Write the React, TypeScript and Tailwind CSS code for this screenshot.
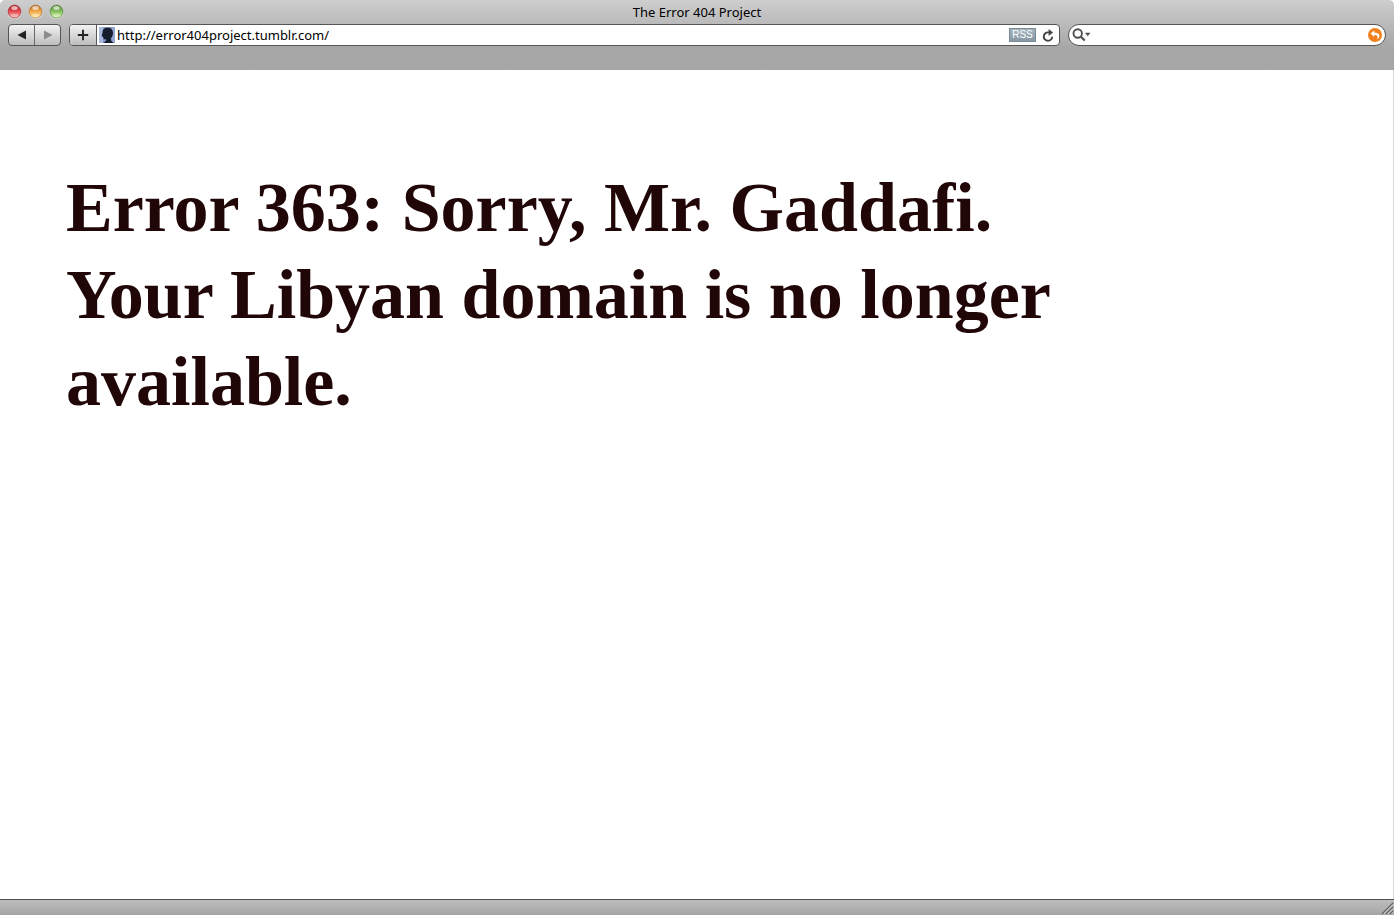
import { useState } from "react";

function TrafficLight({ id, label, dark, mid, light }: { id: string; label: string; dark: string; mid: string; light: string }) {
  return (
    <button type="button" aria-label={label} className="size-[15px]">
      <svg viewBox="0 0 15 15" className="block size-[15px]">
        <defs>
          <linearGradient id={id} x1="0" y1="0" x2="0" y2="1">
            <stop offset="0" stopColor={dark} />
            <stop offset="0.45" stopColor={mid} />
            <stop offset="1" stopColor={light} />
          </linearGradient>
        </defs>
        <circle cx="7.5" cy="8" r="7" fill="#dedede" />
        <circle cx="7.5" cy="7.5" r="6.4" fill={`url(#${id})`} stroke={dark} strokeWidth="0.8" strokeOpacity="0.8" />
        <ellipse cx="7.5" cy="4" rx="3.2" ry="1.9" fill="#fff" opacity="0.65" />
        <ellipse cx="7.5" cy="11.4" rx="4" ry="1.8" fill="#fff" opacity="0.3" />
      </svg>
    </button>
  );
}

function Favicon() {
  return (
    <svg viewBox="0 0 16 16" className="block size-4 shrink-0" aria-hidden="true">
      <rect width="16" height="16" fill="#8296c6" />
      <path d="M0 0h4v16H0z" fill="#a9b8dc" />
      <path d="M13 0h3v16h-3z" fill="#93a5d2" />
      <path d="M3.500 5.500C3.500 2 6 .8 8.700 .8c3.500 0 5.300 2.200 5.300 5.100 0 2.300-.8 4-2.200 5.300l.3 2.300 2.400 2.500H4.500l2.700-2.500-.2-1.300H4.700l-.5-2.200-1.500-.8z" fill="#141c2e" />
    </svg>
  );
}

export default function App() {
  const [url, setUrl] = useState("http://error404project.tumblr.com/");
  const [query, setQuery] = useState("");

  return (
    <div className="flex min-h-screen flex-col bg-white font-['Noto_Sans',sans-serif] text-black">
      <header className="h-[70px] shrink-0 rounded-t-[5px] bg-linear-to-b from-[#cecece] to-[#a6a6a6] to-70%">
        <div className="grid h-[23px] grid-cols-[1fr_auto_1fr] items-center px-[7px]">
          <div className="flex gap-[6px]">
            <TrafficLight id="close" label="Close" dark="#a32129" mid="#e0434a" light="#ffb0ac" />
            <TrafficLight id="minimize" label="Minimize" dark="#ae6527" mid="#f0a343" light="#ffec9f" />
            <TrafficLight id="zoom" label="Zoom" dark="#4d8134" mid="#7fbc59" light="#d3f7a5" />
          </div>
          <h2 className="text-[13px] leading-5">The Error 404 Project</h2>
        </div>

        <div className="flex h-[23px] items-center gap-2 px-2 pt-px">
          <nav aria-label="History" className="flex h-[22px] w-[53px] shrink-0 overflow-hidden rounded-[4px] border border-[#555] bg-linear-to-b from-[#f3f3f3] to-[#bdbdbd]">
            <button type="button" aria-label="Back" className="flex flex-1 items-center justify-center border-r border-[#666]">
              <svg viewBox="0 0 10 10" className="size-[10px]"><path d="M.5 5 9 .6v8.800z" fill="#222" /></svg>
            </button>
            <button type="button" aria-label="Forward" className="flex flex-1 items-center justify-center">
              <svg viewBox="0 0 10 10" className="size-[10px]"><path d="M9.500 5 1 .6v8.800z" fill="#8b8b8b" /></svg>
            </button>
          </nav>

          <div className="flex h-[22px] min-w-0 flex-1 items-center overflow-hidden rounded-[4px] border border-[#555] bg-white">
            <button type="button" aria-label="Add bookmark" className="flex h-full w-[27px] shrink-0 items-center justify-center border-r border-[#555] bg-linear-to-b from-[#f3f3f3] to-[#bdbdbd]">
              <svg viewBox="0 0 12 12" className="size-3"><path d="M6 .8v10.400M.8 6h10.400" stroke="#222" strokeWidth="1.900" /></svg>
            </button>
            <div className="flex min-w-0 flex-1 items-center gap-[2px] pl-[2px]">
              <Favicon />
              <input
                aria-label="Address"
                value={url}
                onChange={(e) => setUrl(e.target.value)}
                className="h-5 min-w-0 flex-1 bg-transparent text-[13px] leading-5 outline-none"
              />
            </div>
            <button type="button" className="h-[14px] w-[27px] shrink-0 border border-[#7b8b96] bg-linear-to-b from-[#a5b5c0] to-[#8797a3] font-['Liberation_Sans',sans-serif] text-[10px] leading-3 text-white">
              RSS
            </button>
            <button type="button" aria-label="Reload" className="flex w-[23px] shrink-0 items-center justify-center">
              <svg viewBox="0 0 12 13" className="h-[13px] w-3">
                <path d="M8 3.400H6.200A4.200 4.200 0 1 0 10.200 7.700" fill="none" stroke="#444" strokeWidth="1.900" />
                <path d="M6.600 .1 11 3.500 6.600 6.900z" fill="#444" />
              </svg>
            </button>
          </div>

          <div className="flex h-[22px] w-[318px] shrink-0 items-center rounded-full border border-[#555] bg-white pr-[3px] pl-[3px]">
            <button type="button" aria-label="Search options" className="shrink-0">
              <svg viewBox="0 0 19 14" className="block h-[14px] w-[19px]">
                <circle cx="5.700" cy="5.500" r="4.200" fill="none" stroke="#505050" strokeWidth="1.900" />
                <path d="m8.700 8.500 4 4" stroke="#505050" strokeWidth="2.300" />
                <path d="M13 4.800h5.400l-2.700 3.400z" fill="#505050" />
              </svg>
            </button>
            <input
              aria-label="Search"
              value={query}
              onChange={(e) => setQuery(e.target.value)}
              className="h-5 min-w-0 flex-1 bg-transparent px-1 text-[13px] leading-5 outline-none"
            />
            <button type="button" aria-label="Return to search results" className="shrink-0">
              <svg viewBox="0 0 14 14" className="block size-[14px]">
                <circle cx="7" cy="7" r="7" fill="#f0811c" />
                <path d="M2.600 5.600 6.200 2.400v2c3.200 0 5.300 1.300 5.300 3.700 0 1.700-1.200 2.800-3.300 3.100 1.300-.8 1.600-1.500 1.300-2.500-.4-1.200-1.600-1.600-3.300-1.600v2z" fill="#fff" />
              </svg>
            </button>
          </div>
        </div>
      </header>

      <main className="flex-1 border-r border-[#d8d8d8] px-[66px] pt-[94px]">
        <h1 className="max-w-[1100px] font-['Liberation_Serif',serif] text-[70px] leading-[87px] font-bold text-[#210608]">
          Error 363: Sorry, Mr. Gaddafi.
          <br />
          Your Libyan domain is no longer available.
        </h1>
      </main>

      <footer className="flex h-4 shrink-0 items-end justify-end border-t border-[#505050] bg-linear-to-b from-[#bdbdbd] to-[#a5a5a5]">
        <svg viewBox="0 0 13 13" className="size-[13px]" aria-hidden="true">
          <path d="M1 12 12 1M5 12l7-7M9 12l3-3" stroke="#5c5c5c" strokeWidth="1.100" />
          <path d="M2.500 12 12 2.500M6.500 12 12 6.500M10.500 12l1.500-1.500" stroke="#ddd" strokeWidth="0.800" />
        </svg>
      </footer>
    </div>
  );
}
